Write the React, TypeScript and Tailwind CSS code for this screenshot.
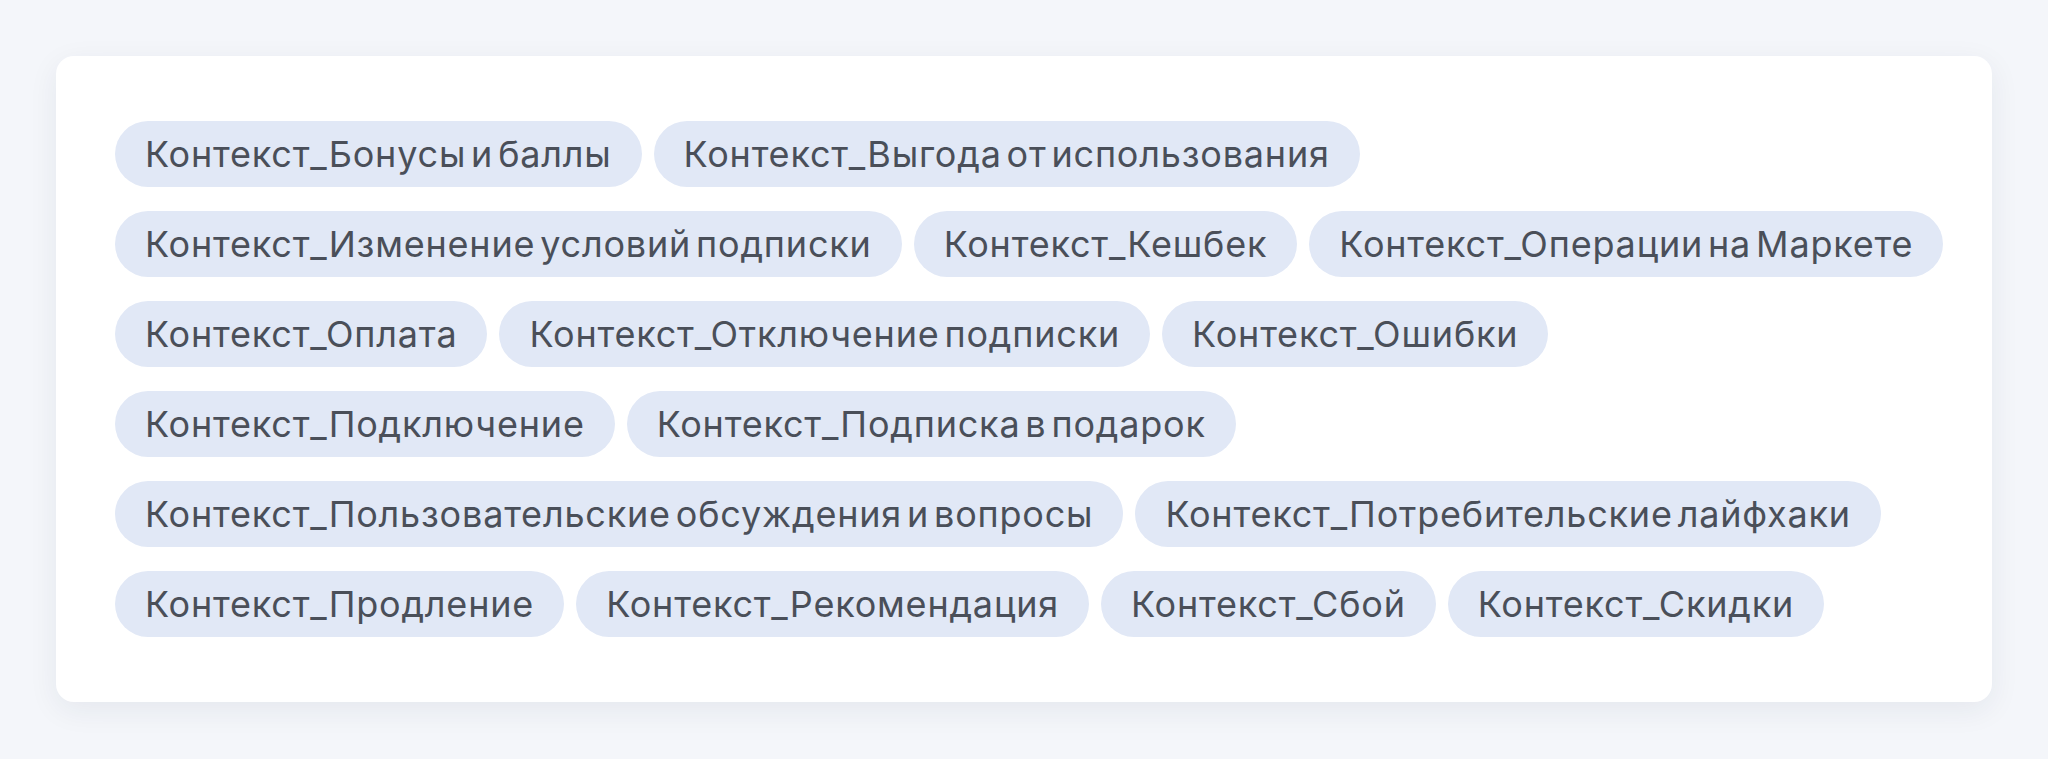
const tags = [
  "Контекст_Бонусы и баллы",
  "Контекст_Выгода от использования",
  "Контекст_Изменение условий подписки",
  "Контекст_Кешбек",
  "Контекст_Операции на Маркете",
  "Контекст_Оплата",
  "Контекст_Отключение подписки",
  "Контекст_Ошибки",
  "Контекст_Подключение",
  "Контекст_Подписка в подарок",
  "Контекст_Пользовательские обсуждения и вопросы",
  "Контекст_Потребительские лайфхаки",
  "Контекст_Продление",
  "Контекст_Рекомендация",
  "Контекст_Сбой",
  "Контекст_Скидки",
];

export default function App() {
  return (
    <div className="min-h-[759px] bg-[#f4f6fa] p-14 font-['Inter',sans-serif]">
      {/* Card */}
      <div className="rounded-[18px] bg-white pl-[59px] pr-[48px] pt-[65px] pb-[65px] shadow-[0_8px_30px_rgba(30,40,70,0.07)]">
        <div className="flex flex-wrap gap-x-3 gap-y-6">
          {tags.map((tag) => (
            <span
              key={tag}
              className="flex h-[66px] items-center rounded-full bg-[#e1e8f6] px-[30px] text-[36px] tracking-[0.8px] [word-spacing:-6px] text-[#4a4f59]"
            >
              {tag}
            </span>
          ))}
        </div>
      </div>
    </div>
  );
}
